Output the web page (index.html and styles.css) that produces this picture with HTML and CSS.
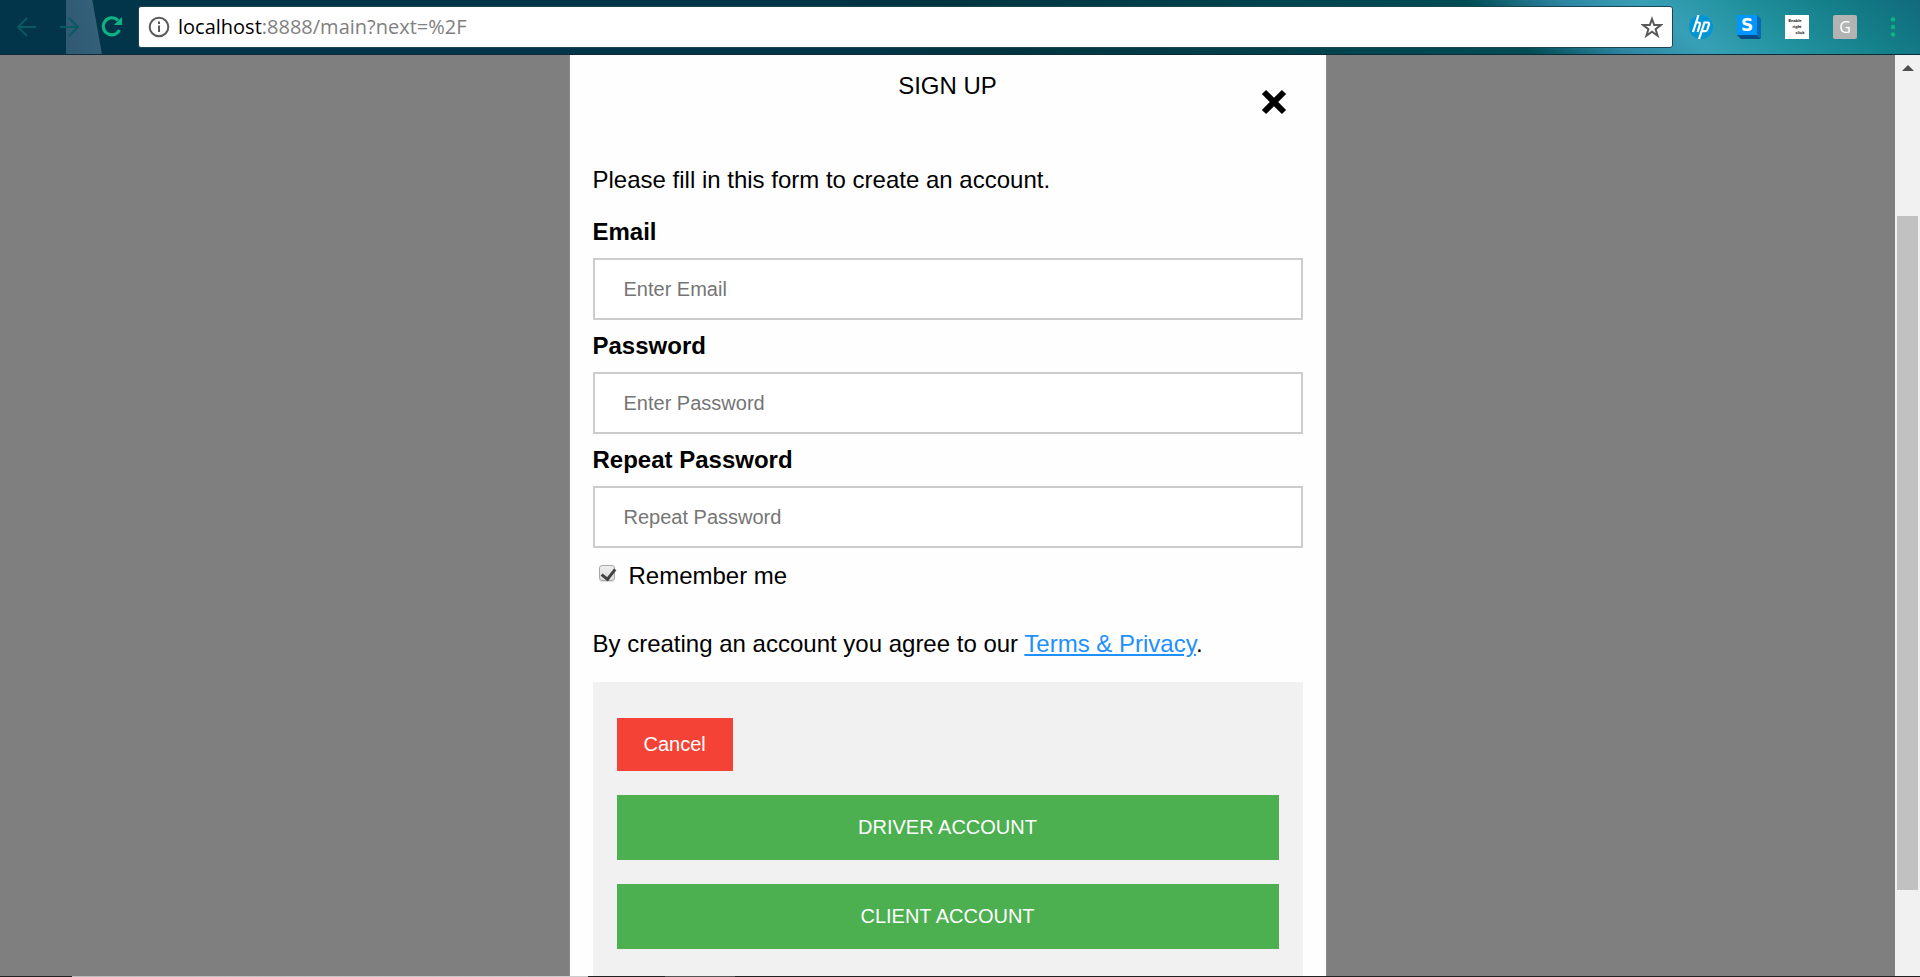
FILE: index.html
```html
<!DOCTYPE html>
<html lang="en">
<head>
<meta charset="utf-8">
<title>Sign up</title>
<link rel="stylesheet" href="styles.css">
</head>
<body>
<header class="toolbar">
  <nav class="nav">
    <button class="icon-btn dim" aria-label="Back"><svg width="20" height="20" viewBox="0 0 20 20"><path d="M19 10H2M10 1L1 10l9 9"/></svg></button>
    <button class="icon-btn dim" aria-label="Forward"><svg width="20" height="20" viewBox="0 0 20 20"><path d="M1 10h17M10 1l9 9-9 9"/></svg></button>
    <button class="icon-btn reload" aria-label="Reload"><svg width="22" height="22" viewBox="0 0 22 22"><path d="M17 4.500A8.500 8.500 0 1 0 18.500 14"/><path class="solid" d="M21 1v8h-8z"/></svg></button>
  </nav>
  <div class="address">
    <svg class="info" width="22" height="22" viewBox="0 0 22 22"><circle cx="11" cy="11" r="9.300"/><path d="M11 9.500v6.500M11 5.500v2.500"/></svg>
    <span class="url"><span class="host">localhost</span>:8888/main?next=%2F</span>
    <button class="icon-btn star" aria-label="Bookmark"><svg width="22" height="22" viewBox="0 0 22 22"><path d="M11 3l2.200 6H20l-5.400 4.100 2 6.600L11 15.700l-5.600 4 2-6.600L2 9h6.800z"/></svg></button>
  </div>
  <div class="extensions">
    <button class="ext" aria-label="HP"><svg width="24" height="24" viewBox="0 0 24 24"><circle cx="12" cy="12" r="12" fill="#0096d6"/><path d="M9.500 0L4 17M6.500 7.500h3q2 0 1.400 2L8.700 17M15.500 7.500L10 24M14.500 7.500h4q2 0 1.400 2l-1.500 5q-.6 1.700-2.300 1.700h-3" fill="none" stroke="#fff" stroke-width="2.200"/></svg></button>
    <button class="ext" aria-label="S"><svg width="24" height="24" viewBox="0 0 24 24"><path d="M0 20l4 4h20l-4-4z" fill="#064a86"/><path d="M20 0l4 4v20l-4-4z" fill="#0a68ac"/><path d="M0 0h20v20H0z" fill="#0096ff"/><text x="10" y="16" text-anchor="middle" class="s-mark">S</text></svg></button>
    <button class="ext click"><span>Enable</span><span>right</span><span>click</span></button>
    <button class="ext letter">G</button>
    <button class="ext menu" aria-label="Menu"><svg width="6" height="20" viewBox="0 0 6 20"><circle cx="3" cy="2.500" r="2.200"/><circle cx="3" cy="10" r="2.200"/><circle cx="3" cy="17.500" r="2.200"/></svg></button>
  </div>
</header>
<div class="viewport">
  <main class="overlay">
    <form class="modal">
      <div class="modal-head">
        <h1 class="title">SIGN UP</h1>
        <button type="button" class="close" aria-label="Close"><svg width="26" height="26" viewBox="0 0 26 26"><path d="M3 3l20 20M23 3L3 23"/></svg></button>
      </div>
      <p class="intro">Please fill in this form to create an account.</p>
      <label class="label" for="email">Email</label>
      <input class="field" id="email" type="text" placeholder="Enter Email">
      <label class="label" for="psw">Password</label>
      <input class="field" id="psw" type="password" placeholder="Enter Password">
      <label class="label" for="repeat">Repeat Password</label>
      <input class="field" id="repeat" type="password" placeholder="Repeat Password">
      <label class="remember"><input class="tick" type="checkbox" checked>Remember me</label>
      <p class="terms">By creating an account you agree to our <a href="#">Terms &amp; Privacy</a>.</p>
      <div class="actions">
        <button type="button" class="btn cancel">Cancel</button>
        <button type="submit" class="btn">DRIVER ACCOUNT</button>
        <button type="submit" class="btn">CLIENT ACCOUNT</button>
      </div>
    </form>
  </main>
  <div class="scrollbar"><svg class="arrow" width="12" height="6" viewBox="0 0 12 6"><path d="M6 0l6 6H0z"/></svg><div class="thumb"></div></div>
</div>
<footer class="taskbar"></footer>
</body>
</html>
```
FILE: styles.css
```css
* { box-sizing: border-box; }

body {
  margin: 0;
  height: 100vh;
  display: flex;
  flex-direction: column;
  overflow: hidden;
  font-family: "Liberation Sans", Arial, sans-serif;
  font-size: 24px;
  line-height: 28px;
  color: #000;
}

button {
  border: 0;
  padding: 0;
  background: none;
  font-family: inherit;
  cursor: pointer;
}

svg { display: block; }

/* Browser toolbar */
.toolbar {
  flex: none;
  display: flex;
  align-items: center;
  height: 55px;
  padding: 0 15px 0 17px;
  border-bottom: 1px solid #0b2b3a;
  background:
    linear-gradient(80deg, #2f5873, #34607a 35px, transparent 36px) 66px 0 / 36px 55px no-repeat,
    linear-gradient(38deg, #02354a 0, #02354a 42%, #003440 50%, #004650 70%, #004c54 77%, #2f86a4 82%, #38a0b6 86%, #2494a2 90%, #14808a 95%, #126a7c 100%);
}

.nav {
  display: flex;
  gap: 22px;
  width: 121px;
}

.icon-btn svg {
  fill: none;
  stroke: currentColor;
  stroke-width: 2;
}

.dim { color: #085a5e; }

.reload { color: #0cb584; }

.reload svg { stroke-width: 3; }

.reload .solid {
  fill: currentColor;
  stroke: none;
}

.address {
  flex: 1;
  display: flex;
  align-items: center;
  height: 42px;
  padding: 0 9px;
  border: 1px solid #1b4553;
  border-radius: 3px;
  background: #fff;
}

.info {
  fill: none;
  stroke: #5a5a5a;
  stroke-width: 2;
}

.url {
  flex: 1;
  margin-left: 8px;
  font-family: "Open Sans", "Noto Sans", sans-serif;
  font-size: 20px;
  color: #808080;
}

.host { color: #000; }

.star { color: #5a5a5a; }

.extensions {
  display: flex;
  align-items: center;
  gap: 24px;
  margin-left: 16px;
}

.ext {
  width: 24px;
  height: 24px;
}

.s-mark {
  font-family: "DejaVu Sans", sans-serif;
  font-size: 17px;
  font-weight: bold;
  fill: #fff;
}

.click {
  display: flex;
  flex-direction: column;
  justify-content: center;
  align-items: center;
  background: #fff;
  color: #000;
  font-size: 4px;
  font-weight: bold;
  line-height: 6px;
}

.click span:first-child { margin-right: 4px; }

.click span:last-child { margin-left: 6px; }

.letter {
  border-radius: 2px;
  background: #b3b3b3;
  color: #fff;
  font-family: "Open Sans", sans-serif;
  font-size: 16px;
}

.menu svg {
  margin: 0 auto;
  fill: #0cb584;
}

/* Page */
.viewport {
  flex: 1;
  min-height: 0;
  display: flex;
}

.overlay {
  flex: 1;
  overflow: hidden;
  background: #7f7f7f;
}

.modal {
  width: 40%;
  min-height: 100%;
  margin: 0 auto;
  padding: 17px 23px 24px;
  background: #fefefe;
  border: solid #888;
  border-width: 0 1px;
}

.modal-head {
  position: relative;
  margin-bottom: 66px;
}

.title {
  margin: 0;
  font-size: 24px;
  font-weight: normal;
  text-align: center;
}

.close {
  position: absolute;
  right: 16px;
  top: 17px;
}

.close svg {
  stroke: #000;
  stroke-width: 6;
}

.intro { margin: 0 0 24px; }

.label {
  display: block;
  font-weight: bold;
}

.field {
  display: block;
  width: 100%;
  height: 62px;
  margin: 12px 0;
  padding: 0 29px;
  border: 2px solid #ccc;
  border-radius: 0;
  background: #fff;
  font-family: inherit;
  font-size: 20px;
}

.field::placeholder { color: #757575; }

.remember {
  display: flex;
  align-items: center;
  gap: 14px;
  margin: 14px 0 40px;
  padding-left: 6px;
}

.tick {
  appearance: none;
  width: 16px;
  height: 16px;
  margin: 0 0 6px;
  border: 1px solid #a8a8a8;
  border-radius: 3px;
  background: linear-gradient(#eee, #dcdcdc);
  box-shadow: 0 1px 1px #ddd;
}

.tick:checked::before {
  content: "";
  display: block;
  width: 6px;
  height: 11px;
  margin: 0 0 0 4px;
  border: solid #404040;
  border-width: 0 3px 3px 0;
  transform: rotate(38deg);
}

.terms { margin: 0 0 24px; }

.terms a { color: #1e90ff; }

.actions {
  padding: 36px 24px;
  background: #f1f1f1;
}

.btn {
  display: block;
  width: 100%;
  margin-bottom: 24px;
  padding: 21px 27px;
  background: #4caf50;
  color: #fff;
  font-size: 20px;
  line-height: 23px;
}

.cancel {
  width: auto;
  padding: 15px 27px;
  background: #f44336;
}

.scrollbar {
  width: 25px;
  padding: 10px 2px 0;
  background: #f1f1f1;
}

.arrow {
  margin: 0 auto 145px;
  fill: #505050;
}

.thumb {
  height: 74%;
  background: #c1c1c1;
}

.taskbar {
  flex: none;
  height: 1px;
  background: linear-gradient(to right, #222 72px, #bbb 72px, #ccc 588px, #222 588px, #222 665px, #555 665px, #555 735px, #222 735px);
}
```
